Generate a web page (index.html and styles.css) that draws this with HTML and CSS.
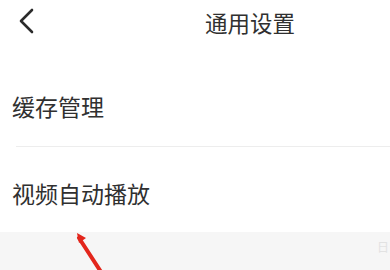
FILE: index.html
```html
<!DOCTYPE html>
<html lang="zh">
<head>
<meta charset="utf-8">
<link rel="stylesheet" href="styles.css">
</head>
<body>
<div class="page">
  <header class="topbar">
    <svg class="back" width="16" height="26" viewBox="0 0 16 26"><path d="M14 2 L3 13 L14 24" fill="none" stroke="#2b2b2b" stroke-width="2.6" stroke-linecap="round" stroke-linejoin="round"/></svg>
    <h1 class="title">通用设置</h1>
  </header>
  <ul class="list">
    <li class="item first">缓存管理</li>
    <li class="item second">视频自动播放</li>
  </ul>
  <div class="footer">
    <span class="tag">日</span>
  </div>
  <svg class="arrow" width="40" height="45" viewBox="0 0 40 45"><path d="M29 45 L5 8" stroke="#e3261c" stroke-width="4" stroke-linecap="round"/><path d="M3 3 L12 8 L5 13 Z" fill="#e3261c"/></svg>
</div>
</body>
</html>
```
FILE: styles.css
```css
* { box-sizing: border-box; }
html, body { margin: 0; padding: 0; background: #fff; }
body { font-family: "Noto Sans CJK SC", "Noto Sans", sans-serif; color: #303030; }
.page { position: relative; width: 390px; height: 270px; overflow: hidden; }
.topbar { height: 44px; display: flex; align-items: flex-start; }
.back { margin: 8px 0 0 18px; }
.title { margin: 7px 0 0 171px; font-size: 22.5px; font-weight: 400; line-height: 30px; color: #303030; }
.list { list-style: none; margin: 0; padding: 0; }
.item { font-size: 23px; line-height: 30px; padding-left: 12px; color: #303030; }
.item.first { padding-top: 47px; padding-bottom: 26px; position: relative; }
.item.first::after { content: ""; position: absolute; left: 16px; right: 0; bottom: 0; height: 1px; background: #ededed; }
.item.second { padding-top: 31px; padding-bottom: 24px; }
.footer { height: 40px; background: #f6f6f6; display: flex; justify-content: flex-end; align-items: flex-start; }
.tag { font-size: 12px; line-height: 14px; color: #e2e2e2; margin: 8px 1px 0 0; }
.arrow { position: absolute; left: 74px; top: 230px; }
```
